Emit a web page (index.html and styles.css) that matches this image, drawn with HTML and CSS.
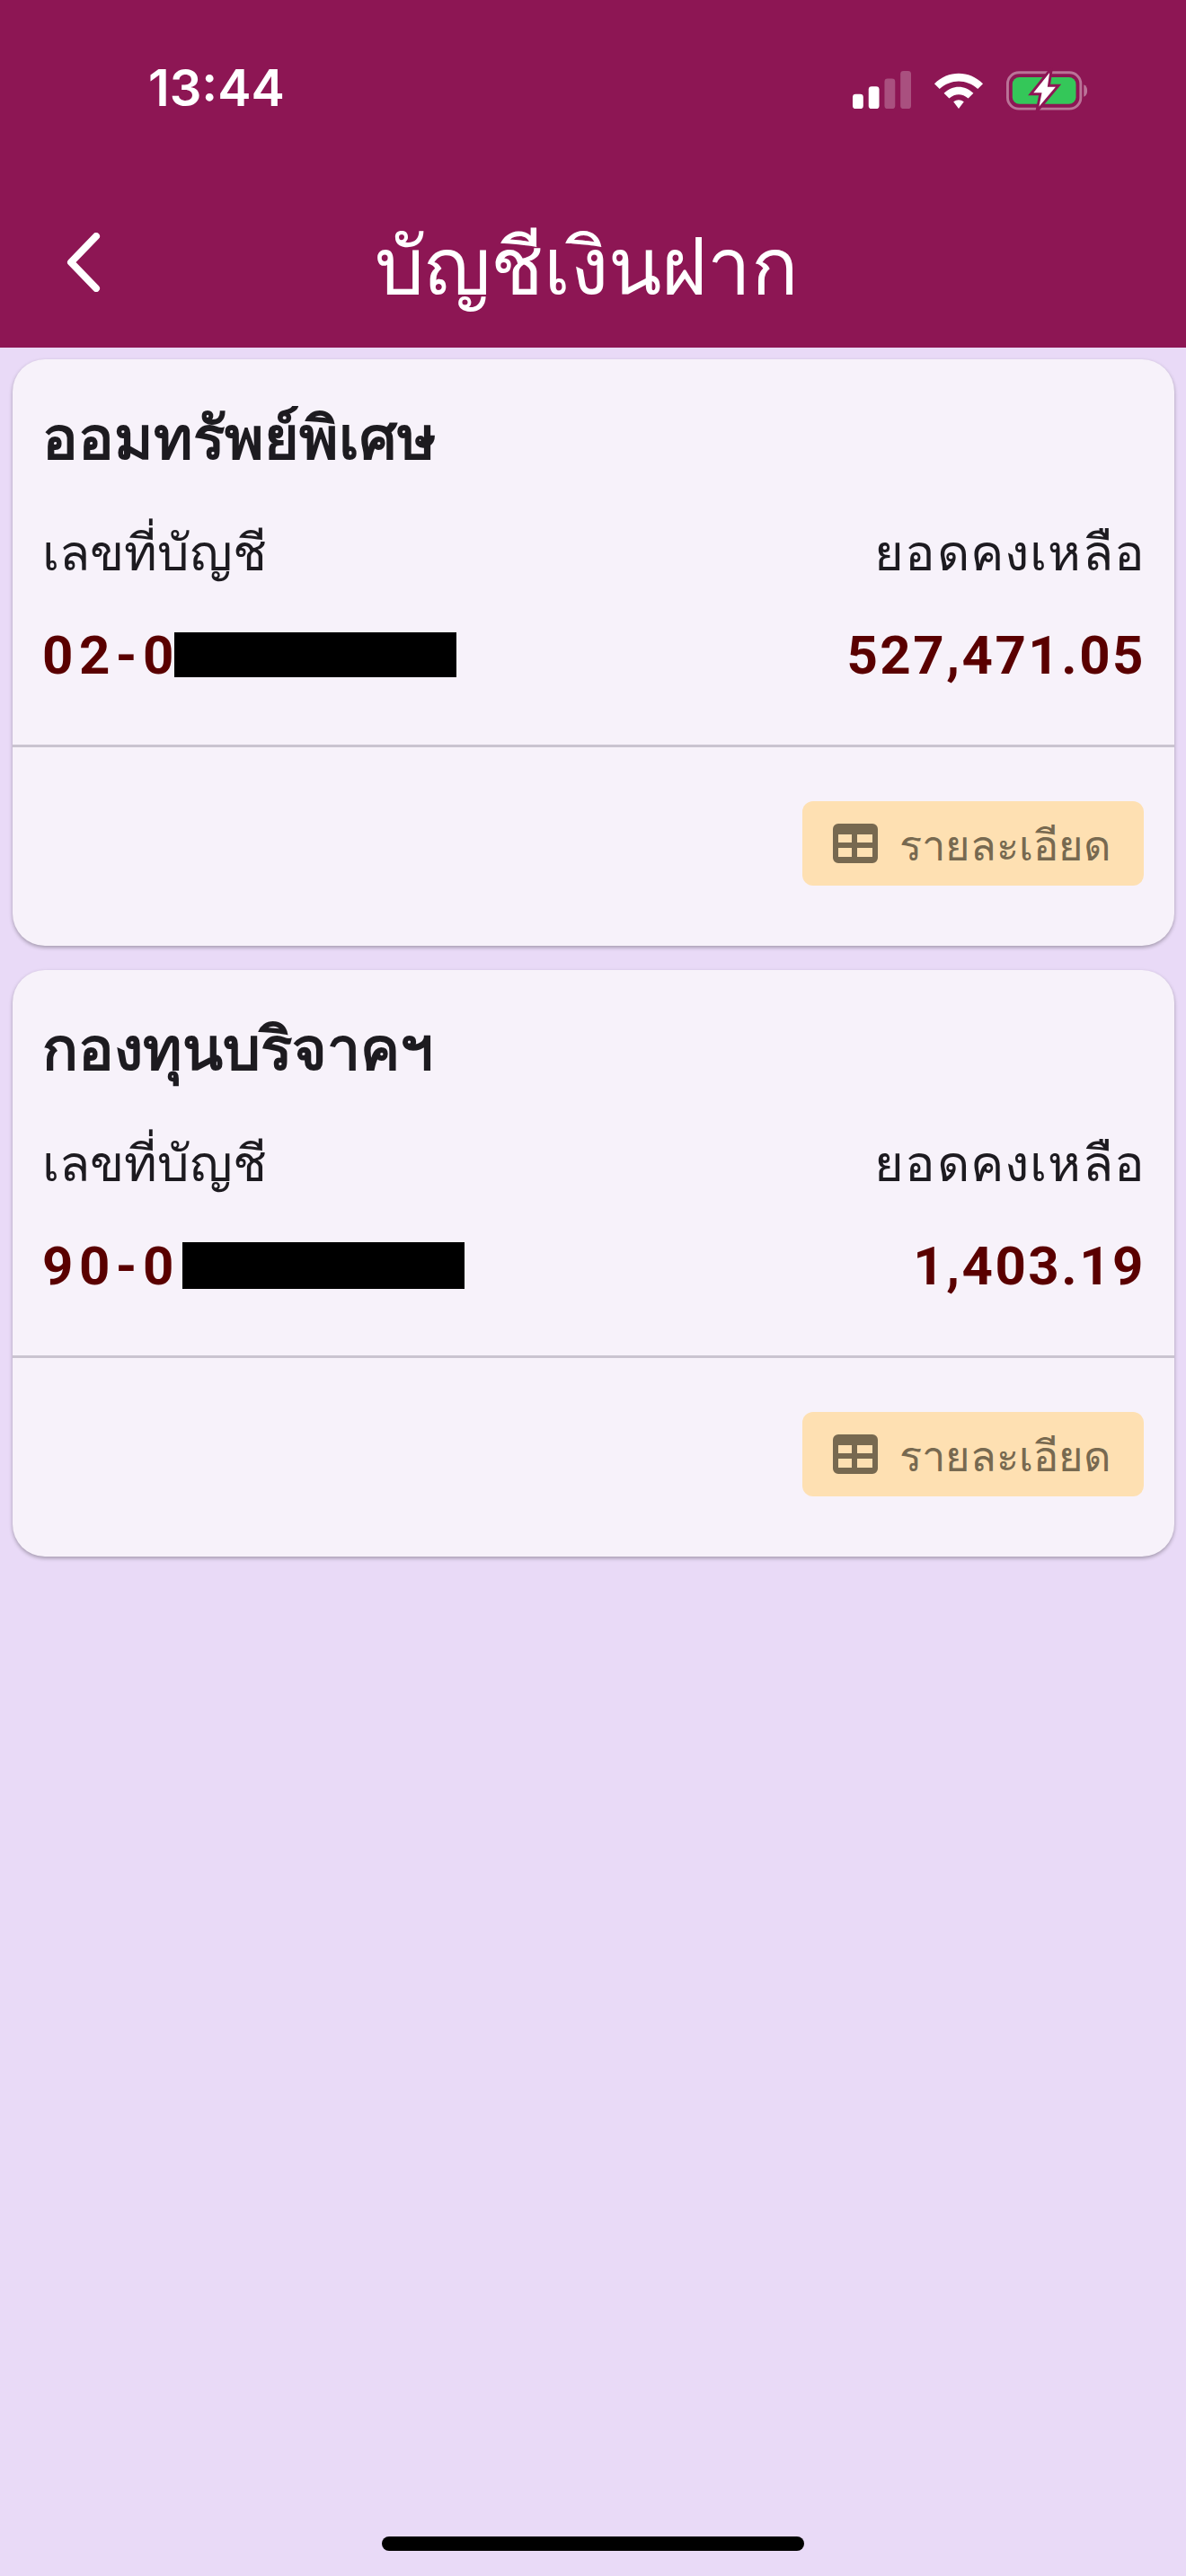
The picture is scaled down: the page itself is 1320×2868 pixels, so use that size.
FILE: index.html
```html
<!DOCTYPE html>
<html lang="th">
<head>
    <meta charset="UTF-8">
    <meta name="viewport" content="width=device-width, initial-scale=1.0">
    <title>บัญชีเงินฝาก</title>
    <link rel="stylesheet" href="styles.css">
</head>
<body>
    <header class="app-header">
        <div class="status-bar">
            <span class="clock">13:44</span>
            <div class="status-icons">
                <svg class="signal" width="65" height="42" viewBox="0 0 66 44" preserveAspectRatio="none">
                    <rect x="0" y="27" width="12" height="17" rx="3.5" fill="#fff"/>
                    <rect x="18" y="18" width="12" height="26" rx="3.5" fill="#fff"/>
                    <rect x="36" y="9" width="12" height="35" rx="3.5" fill="#fff" opacity="0.25"/>
                    <rect x="54" y="0" width="12" height="44" rx="3.5" fill="#fff" opacity="0.25"/>
                </svg>
                <svg class="wifi" width="56" height="42" viewBox="0 0 58 44" preserveAspectRatio="none">
                    <path d="M1 15C17 -1 41 -1 57 15L51 21C38 9 20 9 7 21Z" fill="#fff"/>
                    <path d="M12 26C22 16 36 16 46 26L40 32C33 26 25 26 18 32Z" fill="#fff"/>
                    <path d="M23 36C27 33 31 33 35 36L29 44Z" fill="#fff"/>
                </svg>
                <svg class="battery" width="93" height="50" viewBox="0 0 96 52" preserveAspectRatio="none">
                    <rect x="1.5" y="6" width="84" height="42" rx="13" fill="none" stroke="#fff" stroke-opacity="0.4" stroke-width="3"/>
                    <rect x="7" y="11.500" width="73" height="31" rx="8" fill="#34c759"/>
                    <path d="M89 20C92 21 93 24 93 27C93 30 92 33 89 34Z" fill="#fff" fill-opacity="0.4"/>
                    <path d="M52 1L28 31H39L35 51L60 21H49Z" fill="#fff" stroke="#8d1654" stroke-width="3"/>
                </svg>
            </div>
        </div>
        <div class="title-bar">
            <svg class="back" width="44" height="66" viewBox="0 0 44 66">
                <path d="M37 4L9 33L37 62" fill="none" stroke="#fff" stroke-width="8" stroke-linecap="round" stroke-linejoin="round"/>
            </svg>
            <h1>บัญชีเงินฝาก</h1>
        </div>
    </header>

    <main class="accounts">
        <section class="card">
            <div class="card-body">
                <h2>ออมทรัพย์พิเศษ</h2>
                <div class="row labels">
                    <span>เลขที่บัญชี</span>
                    <span class="label-end">ยอดคงเหลือ</span>
                </div>
                <div class="row values">
                    <span class="acc-no">02-0<i class="redact"></i></span>
                    <span>527,471.05</span>
                </div>
            </div>
            <div class="card-foot">
                <button class="detail-btn">
                    <svg width="50" height="44" viewBox="0 0 50 44"><path fill-rule="evenodd" d="M6 0H44A6 6 0 0 1 50 6V38A6 6 0 0 1 44 44H6A6 6 0 0 1 0 38V6A6 6 0 0 1 6 0ZM6 12V21H21V12ZM27 12V21H44V12ZM6 27V37H21V27ZM27 27V37H44V27Z" fill="#776950"/></svg>
                    <span>รายละเอียด</span>
                </button>
            </div>
        </section>

        <section class="card">
            <div class="card-body">
                <h2>กองทุนบริจาคฯ</h2>
                <div class="row labels">
                    <span>เลขที่บัญชี</span>
                    <span class="label-end">ยอดคงเหลือ</span>
                </div>
                <div class="row values">
                    <span class="acc-no">90-0<i class="redact redact-second"></i></span>
                    <span>1,403.19</span>
                </div>
            </div>
            <div class="card-foot">
                <button class="detail-btn">
                    <svg width="50" height="44" viewBox="0 0 50 44"><path fill-rule="evenodd" d="M6 0H44A6 6 0 0 1 50 6V38A6 6 0 0 1 44 44H6A6 6 0 0 1 0 38V6A6 6 0 0 1 6 0ZM6 12V21H21V12ZM27 12V21H44V12ZM6 27V37H21V27ZM27 27V37H44V27Z" fill="#776950"/></svg>
                    <span>รายละเอียด</span>
                </button>
            </div>
        </section>
    </main>

    <div class="home-bar"></div>
</body>
</html>
```

FILE: styles.css
```css
* {
    box-sizing: border-box;
}
html, body {
    height: 2868px;
}
body {
    margin: 0;
    display: flex;
    flex-direction: column;
    overflow: hidden;
    background-color: #e9daf7;
    font-family: "Noto Sans", "Liberation Sans", sans-serif;
    color: #1d1b20;
}
.app-header {
    height: 387px;
    background-color: #8d1654;
    color: white;
}
.status-bar {
    height: 240px;
    padding: 68px 107px 0 165px;
    display: flex;
    justify-content: space-between;
    align-items: flex-start;
}
.clock {
    font-family: Inter, sans-serif;
    font-size: 56px;
    font-weight: 600;
    line-height: 60px;
}
.status-icons {
    display: flex;
    align-items: center;
    gap: 25px;
    margin-top: 7px;
}
.title-bar {
    display: flex;
    align-items: center;
    height: 100px;
    padding-left: 70px;
}
.back {
    flex-shrink: 0;
    margin-top: 3px;
}
.title-bar h1 {
    margin: 6px 0 0 303px;
    font-size: 87px;
    font-weight: 400;
    line-height: 100px;
    white-space: nowrap;
}
.accounts {
    display: flex;
    flex-direction: column;
    gap: 27px;
    padding: 13px 13px 0 14px;
}
.card {
    height: 653px;
    background-color: #f7f2fa;
    border-radius: 36px;
    box-shadow: 0 2px 4px rgba(0, 0, 0, 0.3);
}
.card-body {
    height: 432px;
    padding: 40px 32px 0 33px;
    border-bottom: 3px solid #cac4d0;
}
.card-body h2 {
    margin: 0;
    font-size: 66px;
    font-weight: 700;
    line-height: 90px;
}
.row {
    display: flex;
    justify-content: space-between;
    align-items: center;
}
.labels {
    margin-top: 45px;
    font-size: 56px;
    line-height: 76px;
}
.label-end {
    letter-spacing: 1.2px;
}
.values {
    margin-top: 49px;
    font-family: Roboto, sans-serif;
    font-size: 60px;
    font-weight: 700;
    letter-spacing: 2.5px;
    line-height: 60px;
    color: #5a0000;
}
.acc-no {
    display: flex;
    align-items: center;
    letter-spacing: 6.5px;
}
.redact {
    display: block;
    width: 314px;
    height: 50px;
    margin: -3px 0 0 -6px;
    background-color: #000;
}
.redact-second {
    height: 52px;
    margin-left: 3px;
}
.card-foot {
    display: flex;
    justify-content: flex-end;
    padding: 60px 34px 0 0;
}
.detail-btn {
    display: flex;
    align-items: center;
    gap: 24px;
    height: 94px;
    width: 380px;
    padding: 0 0 0 34px;
    border: none;
    border-radius: 12px;
    background-color: #fee0b2;
    color: #776950;
    font-family: "Noto Sans", "Liberation Sans", sans-serif;
    font-size: 47px;
    white-space: nowrap;
}
.detail-btn span {
    margin-top: 4px;
}
.detail-btn svg {
    flex-shrink: 0;
}
.home-bar {
    width: 470px;
    height: 16px;
    margin: auto auto 28px;
    border-radius: 8px;
    background-color: #000;
}
```
